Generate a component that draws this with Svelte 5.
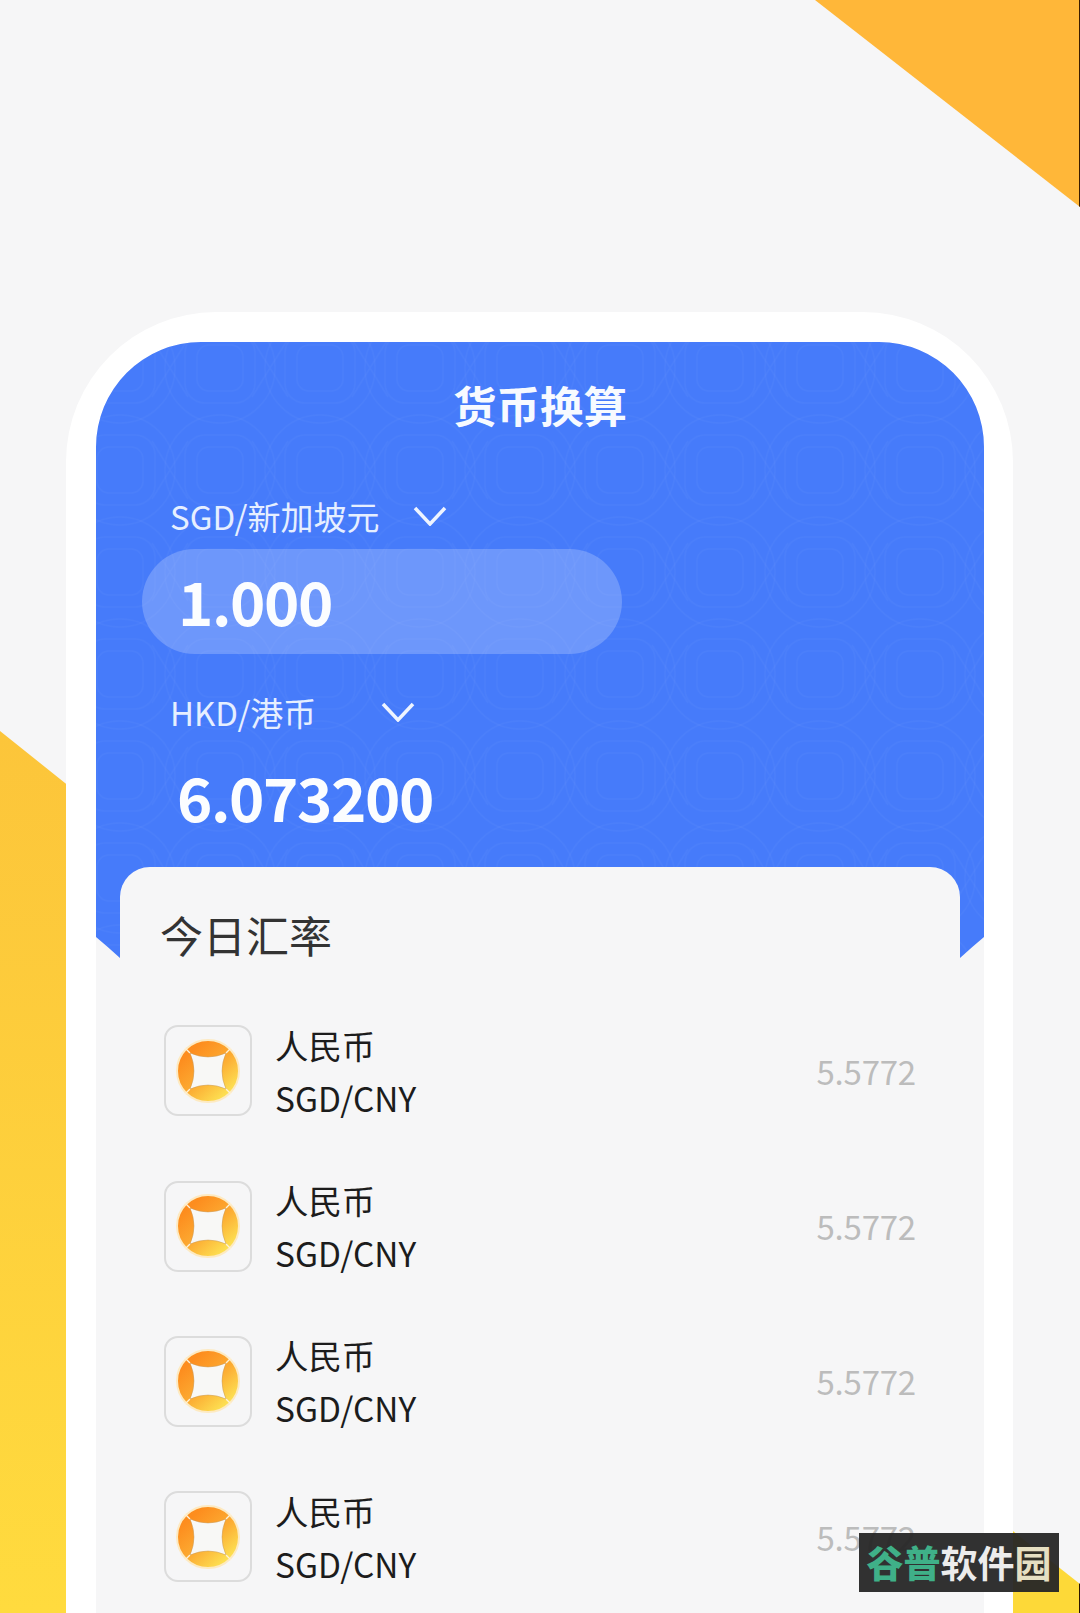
<script>
const rows = [
	{ name: '人民币', pair: 'SGD/CNY', rate: '5.5772' },
	{ name: '人民币', pair: 'SGD/CNY', rate: '5.5772' },
	{ name: '人民币', pair: 'SGD/CNY', rate: '5.5772' },
	{ name: '人民币', pair: 'SGD/CNY', rate: '5.5772' }
];
</script>

<div class="page">
	<div class="corner-top"></div>
	<div class="corner-left"></div>
	<div class="corner-right"></div>

	<div class="phone">
		<div class="screen">
			<header class="head">
				<svg class="pattern" width="888" height="640" aria-hidden="true">
					<defs>
						<pattern id="coins" x="74" y="-25" width="100" height="102" patternUnits="userSpaceOnUse">
							<g fill="none" stroke="#fff" stroke-opacity="0.028" stroke-width="1.5">
								<circle cx="50" cy="51" r="55" />
								<circle cx="-50" cy="51" r="55" />
								<circle cx="150" cy="51" r="55" />
								<circle cx="50" cy="-51" r="55" />
								<circle cx="50" cy="153" r="55" />
								<rect x="27" y="28" width="46" height="46" rx="12" />
								<rect x="15" y="16" width="70" height="70" rx="20" />
								<path d="M0 51 L18 22 M0 51 L18 80 M100 51 L82 22 M100 51 L82 80" />
							</g>
						</pattern>
					</defs>
					<rect width="888" height="640" fill="url(#coins)" />
				</svg>

				<h1>货币换算</h1>

				<div class="label first">
					<span>SGD/新加坡元</span>
					<svg width="34" height="20" viewBox="0 0 34 20"><path d="M2 2 L17 18 L32 2" /></svg>
				</div>
				<div class="amount pill">1.000</div>

				<div class="label second">
					<span>HKD/港币</span>
					<svg width="34" height="20" viewBox="0 0 34 20"><path d="M2 2 L17 18 L32 2" /></svg>
				</div>
				<div class="amount result">6.073200</div>
			</header>

			<section class="card">
				<h2>今日汇率</h2>
				{#each rows as row}
					<div class="row">
						<div class="coin">
							<svg width="66" height="66" viewBox="0 0 66 66">
								<defs>
									<linearGradient id="gold" x1="0.15" y1="0.25" x2="0.75" y2="0.95">
										<stop offset="0" stop-color="#fd8d1e" />
										<stop offset="0.5" stop-color="#fcab32" />
										<stop offset="1" stop-color="#fde354" />
									</linearGradient>
								</defs>
								<circle cx="33" cy="33" r="31" fill="url(#gold)" stroke="#fdeac2" stroke-width="2" />
								<path d="M15 15 L10 10 M51 15 L56 10 M15 51 L10 56 M51 51 L56 56" fill="none" stroke="#fdf1d8" stroke-width="1.4" />
								<path d="M15 15 Q33 23 51 15 Q43 33 51 51 Q33 43 15 51 Q23 33 15 15 Z" fill="#f8f8f6" stroke="#c79a5c" stroke-opacity="0.6" stroke-width="0.8" />
							</svg>
						</div>
						<div class="names">
							<div>{row.name}</div>
							<div>{row.pair}</div>
						</div>
						<div class="rate">{row.rate}</div>
					</div>
				{/each}
			</section>
		</div>
	</div>

	<div class="mark"><b>谷普</b><span>软件</span><i>园</i></div>
</div>

<style>
	:global(body) {
		margin: 0;
		background: #f6f6f7;
	}

	.page {
		position: relative;
		width: 1080px;
		height: 1613px;
		padding-top: 312px;
		box-sizing: border-box;
		overflow: hidden;
		background: #f6f6f7;
		font-family: "Noto Sans CJK SC", "Noto Sans", sans-serif;
	}

	.corner-top {
		position: absolute;
		left: 815px;
		top: 0;
		width: 265px;
		height: 207px;
		box-sizing: border-box;
		border-right: 1px solid #3a1c00;
		background: #ffb739;
		clip-path: polygon(0 0, 100% 0, 100% 100%);
	}

	.corner-left {
		position: absolute;
		left: 0;
		top: 731px;
		width: 120px;
		height: 882px;
		background: linear-gradient(#fcc53a, #ffdb3e);
		clip-path: polygon(0 0, 100% 96px, 100% 100%, 0 100%);
	}

	.corner-right {
		position: absolute;
		left: 980px;
		top: 1505px;
		width: 100px;
		height: 108px;
		box-sizing: border-box;
		border-right: 1px solid #2a1500;
		background: #fdd938;
		clip-path: polygon(0 0, 100% 79px, 100% 100%, 0 100%);
	}

	.phone {
		position: relative;
		width: 947px;
		height: 1301px;
		margin-left: 66px;
		padding: 30px 29px 0 30px;
		box-sizing: border-box;
		background: #fff;
		border-radius: 150px 150px 0 0;
	}

	.screen {
		width: 888px;
		height: 100%;
		background: #f6f6f7;
		border-radius: 105px 105px 0 0;
	}

	.head {
		position: relative;
		height: 640px;
		padding-top: 40px;
		box-sizing: border-box;
		background: #467bfa;
		color: #fff;
		clip-path: path("M0 105 A105 105 0 0 1 105 0 H783 A105 105 0 0 1 888 105 V595 Q876 605 864 616 V640 H24 V616 Q12 605 0 595 Z");
	}

	.pattern {
		position: absolute;
		left: 0;
		top: 0;
	}

	h1 {
		position: relative;
		margin: 0;
		font-size: 43.5px;
		line-height: 46px;
		font-weight: 700;
		text-align: center;
		color: #f7faff;
	}

	.label {
		position: relative;
		display: flex;
		align-items: center;
		margin-left: 74px;
		font-size: 33px;
		line-height: 44px;
		color: #e6efff;
	}

	.label svg {
		fill: none;
		stroke: #eef4ff;
		stroke-width: 3.5;
	}

	.label.first {
		gap: 34px;
		margin-top: 66px;
	}

	.label.second {
		gap: 65px;
		margin-top: 36px;
	}

	.amount {
		position: relative;
		font-size: 60px;
		font-weight: 700;
		letter-spacing: -1.4px;
		color: #fbfdff;
	}

	.pill {
		width: 480px;
		height: 105px;
		margin: 11px 0 0 46px;
		padding-left: 36px;
		box-sizing: border-box;
		line-height: 101px;
		border-radius: 53px;
		background: rgba(255, 255, 255, 0.21);
	}

	.result {
		margin: 22px 0 0 81px;
		line-height: 80px;
	}

	.card {
		position: relative;
		height: 746px;
		margin: -115px 24px 0;
		padding: 39px 44px 0 40px;
		box-sizing: border-box;
		background: #f6f6f7;
		border-radius: 30px 30px 0 0;
	}

	h2 {
		margin: 0 0 31px;
		font-size: 43px;
		line-height: 56px;
		font-weight: 400;
		color: #333;
	}

	.row {
		display: flex;
		align-items: center;
		height: 155.4px;
	}

	.coin {
		display: flex;
		align-items: center;
		justify-content: center;
		width: 88px;
		height: 91px;
		margin-left: 4px;
		box-sizing: border-box;
		border: 2px solid #dcdcdc;
		border-radius: 14px;
	}

	.names {
		flex: 1;
		margin-left: 23px;
		font-size: 33.4px;
		line-height: 53px;
		color: #1c1c1c;
	}

	.rate {
		font-size: 33px;
		letter-spacing: -0.2px;
		color: #bcbcbc;
	}

	.mark {
		position: absolute;
		left: 859px;
		top: 1533px;
		display: flex;
		align-items: center;
		justify-content: center;
		width: 200px;
		height: 59px;
		background: rgba(38, 38, 38, 0.95);
		font-size: 37px;
		font-weight: 700;
		line-height: 59px;
	}

	.mark b {
		color: #3fb088;
	}

	.mark span {
		color: #ececec;
	}

	.mark i {
		font-style: normal;
		color: #e6dfc2;
	}
</style>
